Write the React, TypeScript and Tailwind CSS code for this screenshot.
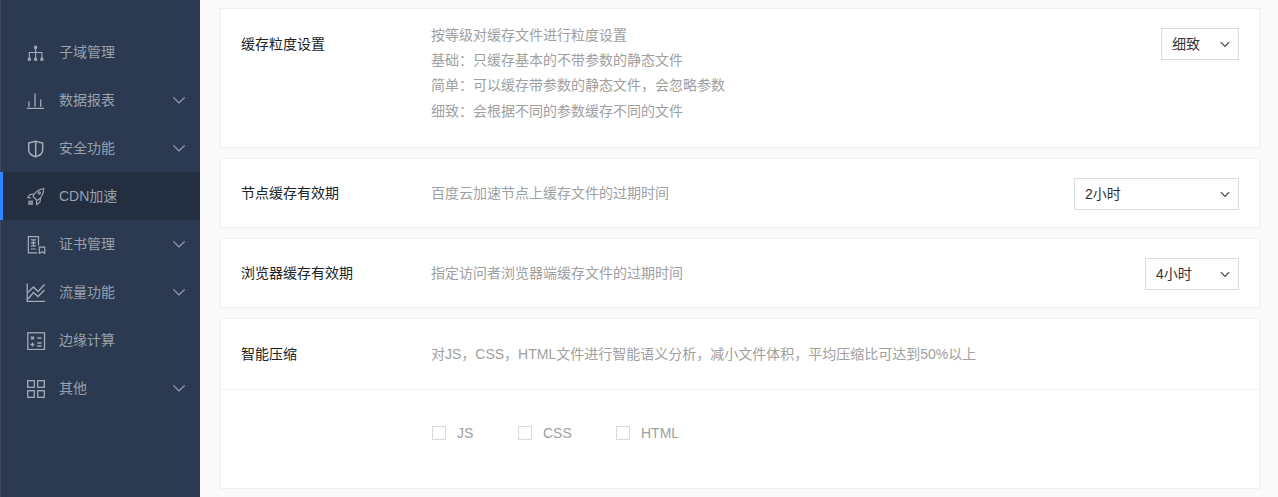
import React from "react";

const Chevron = ({ className, width = 1.1 }: { className: string; width?: number }) => (
  <svg viewBox="0 0 12 8" fill="none" stroke="currentColor" strokeWidth={width} className={className}>
    <path d="M1 1.200 6 6.200 11 1.200" />
  </svg>
);

const iconProps = {
  width: 20,
  height: 20,
  viewBox: "0 0 20 20",
  fill: "none",
  stroke: "currentColor",
  strokeWidth: 1.3,
};

const icons: Record<string, React.ReactNode> = {
  org: (
    <svg {...iconProps} strokeWidth={1.1}>
      <path d="M9.600 6v11M3.300 16.500V10.500h12.600v6" />
      <g fill="currentColor" stroke="none">
        <rect x="8.100" y="3.800" width="3" height="3" />
        <rect x="1.800" y="15.800" width="3" height="3" />
        <rect x="8.100" y="15.800" width="3" height="3" />
        <rect x="14.400" y="15.800" width="3" height="3" />
      </g>
    </svg>
  ),
  bars: (
    <svg {...iconProps}>
      <path d="M.7 18.300H18M3 16.800v-5.300M9 16.800V3.500M14.700 16.800V9.500" />
    </svg>
  ),
  shield: (
    <svg {...iconProps} strokeWidth={1.5}>
      <path d="M2.700 5 9.700 3.300l7 1.700v7c0 3.300-3 5.600-7 6.700-4-1.100-7-3.400-7-6.700z" />
      <path d="M9.700 3.300v15.400" />
    </svg>
  ),
  rocket: (
    <svg {...iconProps} strokeWidth={1.1}>
      <path d="M17.800 2.500C12 3.500 9 6 7 10.500l4 4c4-2 6.500-6 6.800-12z" />
      <path d="M8 8 4 8.500 1.700 11.500 5 12M14.500 12 14 16l-3.300 2.700-.2-3.700" />
      <circle cx="13.300" cy="7" r="1.100" />
      <rect x="2.200" y="14.500" width="4.800" height="4.500" fill="currentColor" fillOpacity="0.75" stroke="none" />
    </svg>
  ),
  cert: (
    <svg {...iconProps} strokeWidth={1.2}>
      <path d="M12.500 11.500V2.600H2.300v16.200h9" />
      <path d="M4.800 5.800h5.200M7.400 5.800v6M4.800 8.800h5.200M4.800 11.800h5.200M4.800 15h5" />
      <path d="M13.300 13.200h5.500v6.300l-2.700-1.700-2.800 1.700z" />
    </svg>
  ),
  trend: (
    <svg {...iconProps}>
      <path d="M1.200 1.500V19.300H19" />
      <path d="M2 10.500 7.500 5l4.500 4.500L18.500 2.500" />
      <path d="M2 17 7.500 10.500l4.500 4 6.500-6.500" />
    </svg>
  ),
  calc: (
    <svg {...iconProps}>
      <rect x="1.800" y="2.800" width="16.700" height="16.700" />
      <path d="M5 6.500l3 3M8 6.500l-3 3M11.300 8h4.200M4.500 14.500h4M6.500 12.500v4M11.300 13h4.200M11.300 16h4.200" />
    </svg>
  ),
  grid: (
    <svg {...iconProps}>
      <rect x="1.700" y="2.700" width="6.600" height="6.600" />
      <rect x="11.700" y="2.700" width="6.600" height="6.600" />
      <rect x="1.700" y="12.700" width="6.600" height="6.600" />
      <rect x="11.700" y="12.700" width="6.600" height="6.600" />
    </svg>
  ),
};

const nav = [
  { icon: "org", label: "子域管理" },
  { icon: "bars", label: "数据报表", arrow: true },
  { icon: "shield", label: "安全功能", arrow: true },
  { icon: "rocket", label: "CDN加速", active: true },
  { icon: "cert", label: "证书管理", arrow: true },
  { icon: "trend", label: "流量功能", arrow: true },
  { icon: "calc", label: "边缘计算" },
  { icon: "grid", label: "其他", arrow: true },
];

const Select = ({ value, width }: { value: string; width: string }) => (
  <div
    className={`${width} h-8 shrink-0 border border-[#dcdcdc] bg-white flex items-center justify-between pl-[10px] pr-2 text-sm text-[#333]`}
  >
    <span>{value}</span>
    <Chevron width={1.4} className="w-[10px] h-[7px] text-[#444]" />
  </div>
);

const Row = ({ label, desc, select, width }: { label: string; desc: string; select: string; width: string }) => (
  <section className="h-[70px] border border-[#f0f0f0] bg-white flex items-center pl-5 pr-5">
    <div className="w-[190px] shrink-0 text-[#222]">{label}</div>
    <div className="flex-1 text-[#a0a0a0]">{desc}</div>
    <div className="pt-[2px]">
      <Select value={select} width={width} />
    </div>
  </section>
);

const Check = ({ label, width }: { label: string; width: string }) => (
  <label className={`${width} flex items-center text-[#a0a0a0]`}>
    <span className="w-[14px] h-[14px] border border-[#d9d9d9] bg-white mr-[11px]" />
    {label}
  </label>
);

export default function App() {
  return (
    <div
      className="w-[1278px] h-[497px] overflow-hidden flex bg-[#fafafa] text-sm"
      style={{ fontFamily: '"Liberation Sans", "Noto Sans CJK SC", sans-serif' }}
    >
      <aside className="w-[200px] shrink-0 bg-[#2b3a50] pt-7 border-l border-[#3a4659]">
        {nav.map((n) => (
          <div
            key={n.label}
            className={`relative h-12 flex items-center pl-[25px] pr-[14px] ${
              n.active ? "bg-[#232e40] -ml-px pl-[26px]" : ""
            } text-[#97a1ae]`}
          >
            {n.active && <span className="absolute left-0 top-0 bottom-0 w-[3px] bg-[#3385ff]" />}
            <span className="w-[33px] shrink-0 flex text-[#a3abb7]">{icons[n.icon]}</span>
            <span className="flex-1">{n.label}</span>
            {n.arrow && <Chevron className="w-[14px] h-[9px]" />}
          </div>
        ))}
      </aside>
      <main className="flex-1 pt-2 pl-5 pr-[18px] flex flex-col gap-[10px]">
        <section className="h-[140px] border border-[#f0f0f0] bg-white flex items-start pl-5 pr-5 pt-[14px]">
          <div className="w-[190px] shrink-0 text-[#222] pt-[11px]">缓存粒度设置</div>
          <div className="flex-1 text-[#a0a0a0] leading-[25.200px]">
            <div>按等级对缓存文件进行粒度设置</div>
            <div>基础：只缓存基本的不带参数的静态文件</div>
            <div>简单：可以缓存带参数的静态文件，会忽略参数</div>
            <div>细致：会根据不同的参数缓存不同的文件</div>
          </div>
          <div className="pt-[5px]">
            <Select value="细致" width="w-[78px]" />
          </div>
        </section>
        <Row label="节点缓存有效期" desc="百度云加速节点上缓存文件的过期时间" select="2小时" width="w-[165px]" />
        <Row label="浏览器缓存有效期" desc="指定访问者浏览器端缓存文件的过期时间" select="4小时" width="w-[94px]" />
        <section className="h-[171px] border border-[#f0f0f0] bg-white">
          <div className="h-[71px] border-b border-[#f0f0f0] flex items-center pl-5">
            <div className="w-[190px] shrink-0 text-[#222]">智能压缩</div>
            <div className="text-[#a0a0a0]">对JS，CSS，HTML文件进行智能语义分析，减小文件体积，平均压缩比可达到50%以上</div>
          </div>
          <div className="flex items-center pl-[211px] pt-[33px]">
            <Check label="JS" width="w-[86px]" />
            <Check label="CSS" width="w-[98px]" />
            <Check label="HTML" width="w-[90px]" />
          </div>
        </section>
      </main>
    </div>
  );
}
